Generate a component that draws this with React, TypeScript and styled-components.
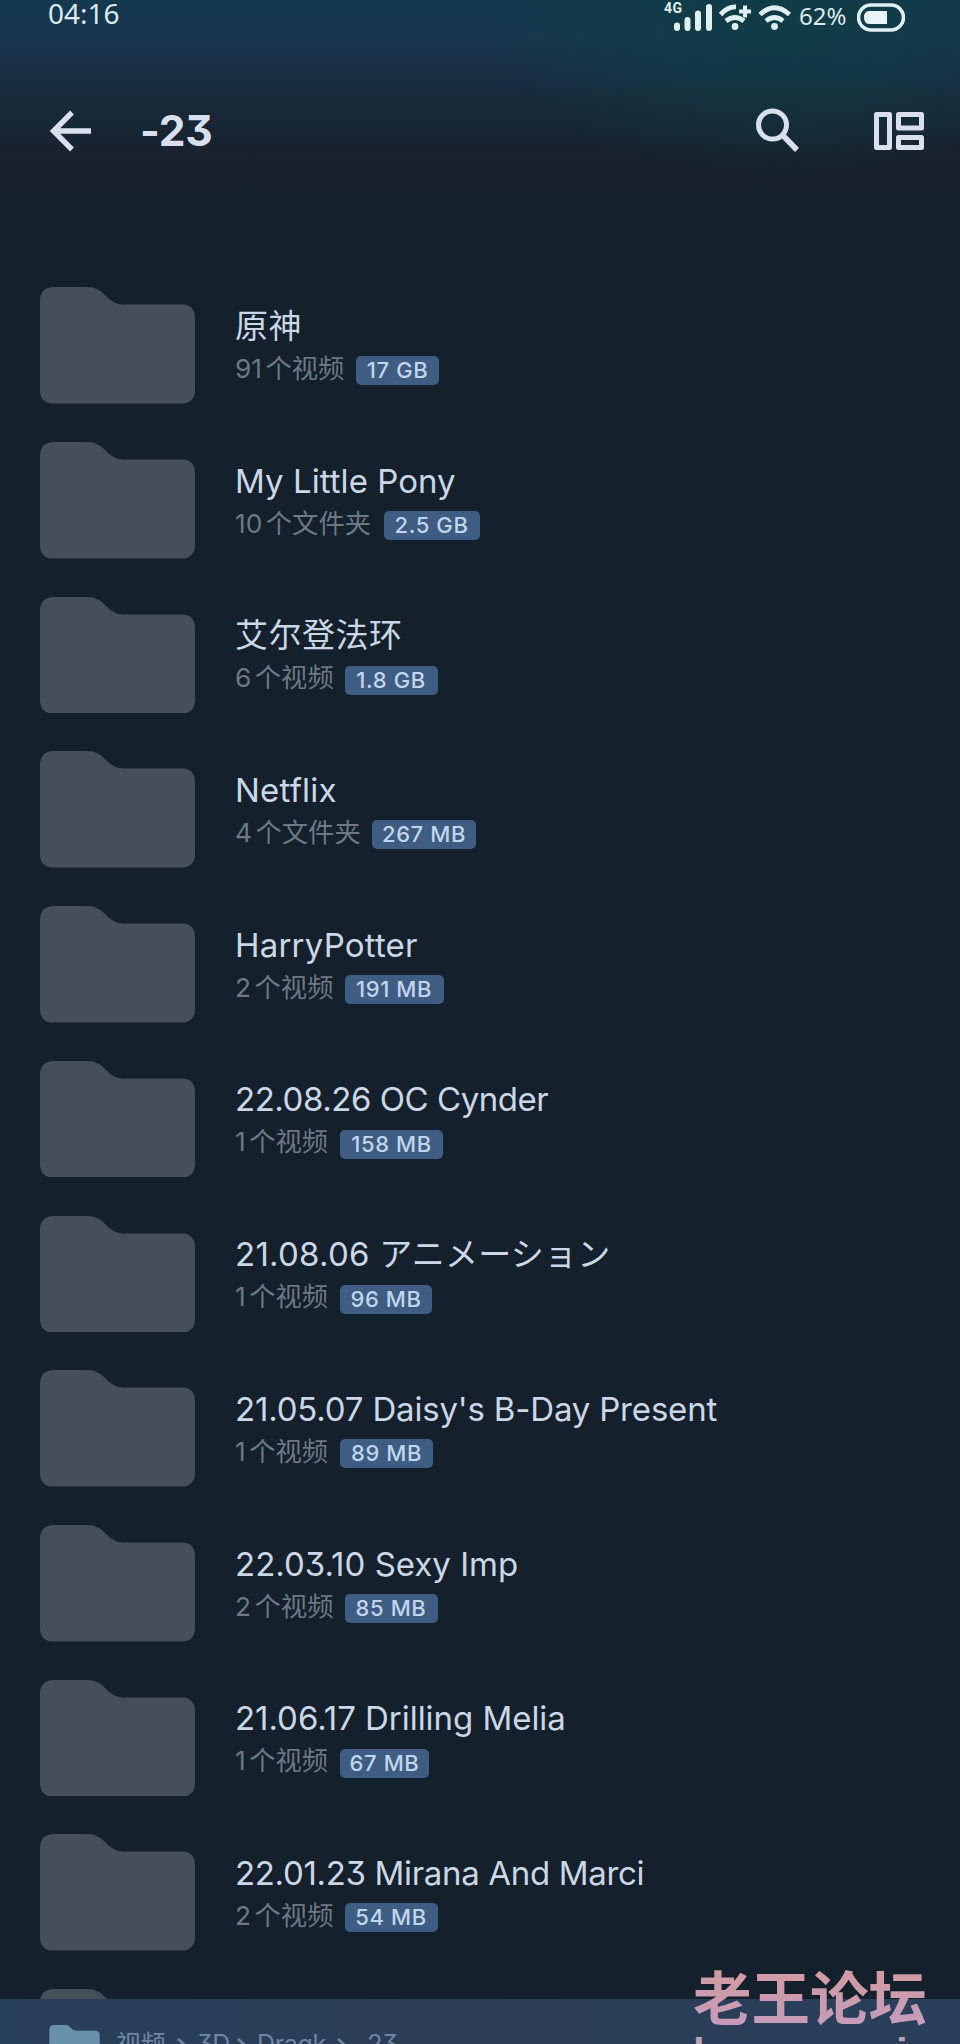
import React from 'react';
import styled, { createGlobalStyle } from 'styled-components';

const GlobalStyle = createGlobalStyle`
  * { box-sizing: border-box; }
  body { margin: 0; background: #14202b; }
`;

const Screen = styled.main`
  position: relative;
  width: 960px;
  height: 2044px;
  overflow: hidden;
  display: flex;
  flex-direction: column;
  font-family: Inter, 'Noto Sans CJK SC', sans-serif;
  font-feature-settings: 'cv09';
  color: #cbd7e6;
  background:
    radial-gradient(ellipse 300px 150px at 780px 24px, rgba(14, 62, 66, 0.85), rgba(14, 62, 66, 0) 100%),
    linear-gradient(180deg, #14384f 0, #18364f 34px, #172f47 66px, #172a39 100px, #18232f 150px, #14202a 215px, #14202b 300px);
`;

const StatusBar = styled.header`
  flex: none;
  display: flex;
  justify-content: space-between;
  height: 36px;
  padding: 0 55px 0 48px;
  font-family: 'Noto Sans', sans-serif;
  color: #dbe9f0;
`;

const Clock = styled.time`
  font-size: 28px;
  line-height: 26px;
`;

const StatusIcons = styled.div`
  display: flex;
  align-items: flex-start;
`;

const BatteryLevel = styled.span`
  width: 58px;
  font-size: 24px;
  line-height: 31px;
`;

const Toolbar = styled.nav`
  flex: none;
  display: flex;
  align-items: center;
  height: 190px;
  padding: 0 36px 0 50px;
  margin-bottom: 61.3px;
`;

const Title = styled.h1`
  flex: 1;
  margin: 0 0 0 49px;
  font-size: 42.5px;
  line-height: 50px;
  font-weight: 700;
  letter-spacing: -0.3px;
  color: #d9dfec;
`;

const IconButton = styled.button<{ $gap?: number }>`
  display: flex;
  margin: 0 0 0 ${(p) => p.$gap ?? 0}px;
  padding: 0;
  border: 0;
  background: none;
  color: #d9dfec;
`;

const FolderList = styled.ul`
  flex: none;
  display: flex;
  flex-direction: column;
  margin: 0;
  padding: 0 0 0 40px;
  list-style: none;
`;

const FolderRow = styled.li`
  display: flex;
  height: 154.73px;
`;

const FolderShape = styled.svg`
  flex: none;
  display: block;
  width: 155px;
  height: 116.5px;
  fill: #454f5a;
`;

const FolderInfo = styled.div`
  padding: 15.5px 0 0 40px;
  white-space: nowrap;
`;

const FolderName = styled.div<{ $track: number }>`
  height: 46px;
  font-size: 33px;
  line-height: 46px;
  letter-spacing: ${(p) => p.$track}px;
`;

const FolderMeta = styled.div`
  display: flex;
  align-items: center;
  height: 44px;
`;

const ItemCount = styled.span<{ $width: number }>`
  display: flex;
  gap: 3.5px;
  width: ${(p) => p.$width + 0.5}px;
  font-size: 26.3px;
  line-height: 36px;
  margin-top: -4px;
  color: #6d7883;
`;

const SizeBadge = styled.span<{ $width: number }>`
  width: ${(p) => p.$width}px;
  height: 29px;
  border-radius: 5px;
  background: #3f5c82;
  color: #c0d5ee;
  font-size: 22px;
  font-weight: 500;
  line-height: 29px;
  text-align: center;
  letter-spacing: 0.6px;
`;

const PathBar = styled.footer`
  position: absolute;
  left: 0;
  right: 0;
  bottom: 0;
  height: 45px;
  overflow: hidden;
  display: flex;
  align-items: flex-start;
  padding: 26px 0 0 49px;
  background: linear-gradient(90deg, #27405a, #2c3d57 45%, #293f5a);
  color: #6f86a3;
  font-size: 25px;
  line-height: 34px;
  white-space: nowrap;
`;

const PathFolder = styled.svg`
  flex: none;
  width: 51px;
  height: 38px;
  margin-right: 16px;
  fill: #6892ac;
`;

const PathPart = styled.span<{ $width: number }>`
  flex: none;
  width: ${(p) => p.$width}px;
  margin-top: 2px;
  letter-spacing: -0.3px;
`;

const PathArrow = styled.svg`
  flex: none;
  width: 11px;
  height: 18px;
  margin: 12px 9px 0 0;
`;

const Watermark = styled.div`
  position: absolute;
  left: 693px;
  top: 1960px;
  font: 700 58.5px/70px 'Noto Sans CJK SC', sans-serif;
  white-space: nowrap;
`;

const WatermarkName = styled.div`
  color: transparent;
  background: linear-gradient(180deg, #d09ba3 20%, #c69cb8 85%);
  background-clip: text;
`;

const WatermarkSite = styled.div`
  padding-top: 1px;
  font: 700 42px/46px 'Liberation Sans', sans-serif;
  color: #baa3b3;
`;

const folderPath =
  'M14 0H46C58 0 62 5 68 11C74 16 77 17.5 85 17.5H143C150 17.5 155 23 155 30V104C155 112 150 117 143 117H12C5 117 0 112 0 104V14C0 5 5 0 14 0Z';

type Folder = {
  name: string;
  track: number;
  count: number;
  unit: string;
  countWidth: number;
  size: string;
  badge: number;
};

const folders: Folder[] = [
  { name: '原神', track: 0.4, count: 91, unit: '个视频', countWidth: 120.5, size: '17 GB', badge: 83 },
  { name: 'My Little Pony', track: 0.05, count: 10, unit: '个文件夹', countWidth: 148, size: '2.5 GB', badge: 96 },
  { name: '艾尔登法环', track: 0.5, count: 6, unit: '个视频', countWidth: 109, size: '1.8 GB', badge: 93 },
  { name: 'Netflix', track: 0.2, count: 4, unit: '个文件夹', countWidth: 136.5, size: '267 MB', badge: 104 },
  { name: 'HarryPotter', track: 0.2, count: 2, unit: '个视频', countWidth: 109, size: '191 MB', badge: 99 },
  { name: '22.08.26 OC Cynder', track: -0.45, count: 1, unit: '个视频', countWidth: 104.5, size: '158 MB', badge: 103 },
  { name: '21.08.06 アニメーション', track: 0.25, count: 1, unit: '个视频', countWidth: 104.5, size: '96 MB', badge: 92 },
  { name: "21.05.07 Daisy's B-Day Present", track: -0.18, count: 1, unit: '个视频', countWidth: 104.5, size: '89 MB', badge: 93 },
  { name: '22.03.10 Sexy Imp', track: 0, count: 2, unit: '个视频', countWidth: 109, size: '85 MB', badge: 93 },
  { name: '21.06.17 Drilling Melia', track: -0.04, count: 1, unit: '个视频', countWidth: 104.5, size: '67 MB', badge: 89 },
  { name: '22.01.23 Mirana And Marci', track: -0.33, count: 2, unit: '个视频', countWidth: 109, size: '54 MB', badge: 93 },
];

const FolderIcon = () => (
  <FolderShape viewBox="0 0 155 117" preserveAspectRatio="none">
    <path d={folderPath} />
  </FolderShape>
);

const Separator = () => (
  <PathArrow viewBox="0 0 11 18" fill="none" stroke="#6f86a3" strokeWidth="2.6">
    <path d="M1 2L9 9L1 16" />
  </PathArrow>
);

const SignalIcons = () => (
  <svg width="136" height="36" viewBox="0 0 136 36" fill="none" stroke="#dff0f2" strokeWidth="5">
    <text x="1" y="13" fontSize="14" fontWeight="700" fontFamily="Roboto, sans-serif" fill="#dff0f2" stroke="none" textLength="18">4G</text>
    <path d="M14 25.500V28M24.5 20V28M35 13.500V28M46 7V28" strokeLinecap="round" strokeWidth="6" />
    <path d="M57.5 14.5Q65 6.5 73 7M63 21Q72 14 81 21M97 14.5Q111.500 1 126.500 14.500M103 21Q111.500 14 120 21" strokeWidth="4.8" />
    <path d="M82 5.500V17.500M76 11.500H88" strokeWidth="4" />
    <circle cx="72" cy="26.500" r="3.4" fill="#dff0f2" stroke="none" />
    <circle cx="111.500" cy="26.500" r="3.4" fill="#dff0f2" stroke="none" />
  </svg>
);

const BatteryIcon = () => (
  <svg width="48" height="36" viewBox="0 0 48 36">
    <rect x="1.5" y="5" width="45" height="25" rx="12.500" fill="none" stroke="#dff0f2" strokeWidth="3.6" />
    <path d="M12 11H30V24H12Q7 24 7 17.500T12 11Z" fill="#e8f5f6" />
  </svg>
);

export default function App() {
  return (
    <>
      <GlobalStyle />
      <Screen>
        <StatusBar>
          <Clock>04:16</Clock>
          <StatusIcons>
            <SignalIcons />
            <BatteryLevel>62%</BatteryLevel>
            <BatteryIcon />
          </StatusIcons>
        </StatusBar>
        <Toolbar>
          <IconButton aria-label="Back">
            <svg width="41" height="42" viewBox="0 0 41 42" fill="none" stroke="currentColor" strokeWidth="5.4">
              <path d="M22 2.500L3.500 21L22 39.500M4 21H41" />
            </svg>
          </IconButton>
          <Title>-23</Title>
          <IconButton aria-label="Search">
            <svg width="44" height="46" viewBox="0 0 44 46" fill="none" stroke="currentColor" strokeWidth="5">
              <circle cx="16.500" cy="17" r="14" />
              <path d="M27 27.500L41 42" strokeWidth="5.6" />
            </svg>
          </IconButton>
          <IconButton aria-label="Layout" $gap={74}>
            <svg width="50" height="38" viewBox="0 0 50 38" fill="none" stroke="currentColor" strokeWidth="5" strokeLinejoin="round">
              <rect x="2.500" y="2.500" width="13" height="33" />
              <rect x="24.500" y="2.500" width="23" height="13.500" />
              <rect x="24.500" y="25.500" width="23" height="10" />
            </svg>
          </IconButton>
        </Toolbar>
        <FolderList>
          {folders.map((f) => (
            <FolderRow key={f.name}>
              <FolderIcon />
              <FolderInfo>
                <FolderName $track={f.track}>{f.name}</FolderName>
                <FolderMeta>
                  <ItemCount $width={f.countWidth}>
                    <span>{f.count}</span>
                    <span>{f.unit}</span>
                  </ItemCount>
                  <SizeBadge $width={f.badge}>{f.size}</SizeBadge>
                </FolderMeta>
              </FolderInfo>
            </FolderRow>
          ))}
          <FolderRow>
            <FolderIcon />
          </FolderRow>
        </FolderList>
        <PathBar>
          <PathFolder viewBox="0 0 155 117">
            <path d={folderPath} />
          </PathFolder>
          <PathPart $width={61}>视频</PathPart>
          <Separator />
          <PathPart $width={40}>3D</PathPart>
          <Separator />
          <PathPart $width={80}>Dragk</PathPart>
          <Separator />
          <PathPart $width={50}>-23</PathPart>
        </PathBar>
        <Watermark>
          <WatermarkName>老王论坛</WatermarkName>
          <WatermarkSite>laowang.vip</WatermarkSite>
        </Watermark>
      </Screen>
    </>
  );
}
